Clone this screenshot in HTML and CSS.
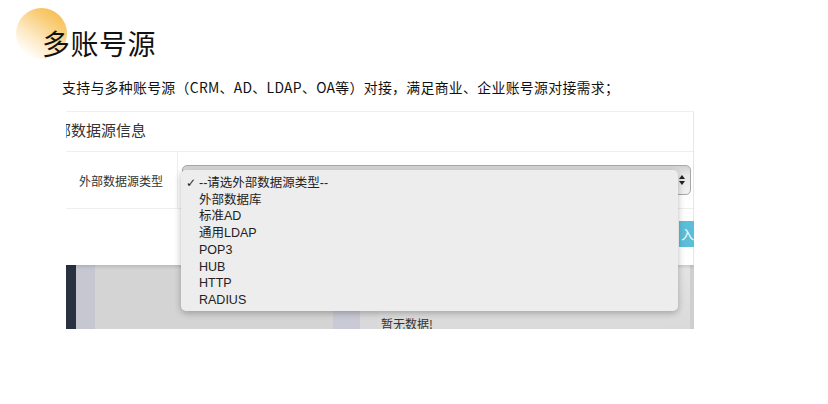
FILE: index.html
```html
<!DOCTYPE html>
<html lang="zh-CN">
<head>
<meta charset="utf-8">
<title>多账号源</title>
<link rel="stylesheet" href="styles.css">
</head>
<body>
<header class="head">
  <span class="blob"></span>
  <h1 class="title">多账号源</h1>
</header>
<p class="desc">支持与多种账号源（CRM、AD、LDAP、OA等）对接，满足商业、企业账号源对接需求；</p>
<div class="shot">
  <div class="panel">
    <div class="panel-head"><span class="panel-title">外部数据源信息</span></div>
    <div class="row">
      <div class="label">外部数据源类型</div>
      <div class="field">
        <div class="select"><span class="arrows"><i class="up"></i><i class="down"></i></span></div>
      </div>
    </div>
    <div class="panel-foot"><span class="btn">入</span></div>
  </div>
  <div class="lower">
    <div class="c-navy"></div>
    <div class="c-lav"></div>
    <div class="c-gray"></div>
    <div class="c-lav2"></div>
    <div class="c-gray2"></div>
    <div class="c-content"><span class="empty">暂无数据!</span></div>
  </div>
  <ul class="menu">
    <li><span class="check">✓</span>--请选外部数据源类型--</li>
    <li>外部数据库</li>
    <li>标准AD</li>
    <li>通用LDAP</li>
    <li>POP3</li>
    <li>HUB</li>
    <li>HTTP</li>
    <li>RADIUS</li>
  </ul>
</div>
</body>
</html>
```
FILE: styles.css
```css
html, body {
  margin: 0;
  padding: 0;
  background: #fff;
}
body {
  width: 828px;
  height: 404px;
  overflow: hidden;
  font-family: "Noto Sans CJK SC", "Noto Sans", sans-serif;
  color: #111;
}
.head {
  position: relative;
  height: 70px;
  padding: 0 0 0 42px;
}
.blob {
  position: absolute;
  left: 16px;
  top: 8px;
  width: 51px;
  height: 51px;
  border-radius: 50%;
  background: linear-gradient(215deg, #f6b63c 0%, #f9cd77 30%, #fde9c4 60%, rgba(255,255,255,0) 88%);
}
.title {
  position: relative;
  margin: 0;
  padding-top: 21px;
  font-size: 28px;
  line-height: 44px;
  font-weight: 400;
  color: #111;
  letter-spacing: 0.5px;
}
.desc {
  margin: 6px 0 0 62px;
  font-size: 13.9px;
  line-height: 22px;
  letter-spacing: 0.3px;
  color: #111;
}
.shot {
  position: relative;
  margin: 13px 0 0 66px;
  width: 628px;
  height: 218px;
  overflow: hidden;
  display: flex;
  flex-direction: column;
  font-family: "Liberation Sans", "Noto Sans CJK SC", sans-serif;
}
.panel {
  background: #fff;
  border-top: 1px solid #eef0f0;
  border-right: 1px solid #e6e8e8;
  height: 153px;
  display: flex;
  flex-direction: column;
  box-shadow: 0 2px 3px rgba(0,0,0,0.12);
  position: relative;
  z-index: 1;
}
.panel-head {
  height: 40px;
  box-sizing: border-box;
  padding-bottom: 5px;
  border-bottom: 1px solid #eeeeee;
  display: flex;
  align-items: center;
  overflow: hidden;
}
.panel-title {
  margin-left: -25px;
  font-size: 15px;
  color: #333;
  white-space: nowrap;
  font-family: "Noto Sans CJK SC", sans-serif;
}
.row {
  height: 56px;
  border-bottom: 1px solid #eeeeee;
  display: flex;
}
.label {
  width: 112px;
  border-right: 1px solid #eeeeee;
  display: flex;
  align-items: center;
  padding-left: 13px;
  box-sizing: border-box;
  font-size: 12px;
  color: #333;
  font-family: "Noto Sans CJK SC", sans-serif;
}
.field {
  flex: 1;
  padding: 13px 2px 0 4px;
}
.select {
  height: 30px;
  box-sizing: border-box;
  border: 1px solid #a8a8a8;
  border-radius: 5px;
  background: linear-gradient(#d2d2d2, #e6e6e6 30%, #f0f0f0);
  display: flex;
  justify-content: flex-end;
  align-items: center;
  padding-right: 5px;
}
.arrows {
  display: flex;
  flex-direction: column;
  gap: 2px;
}
.up, .down {
  display: block;
  width: 0;
  height: 0;
  border-left: 3px solid transparent;
  border-right: 3px solid transparent;
}
.up { border-bottom: 4px solid #222; }
.down { border-top: 4px solid #222; }
.panel-foot {
  flex: 1;
  display: flex;
  justify-content: flex-end;
  align-items: flex-start;
  padding-top: 12px;
}
.btn {
  width: 50px;
  height: 26px;
  margin-right: -36px;
  background: #5bbfd9;
  color: #fff;
  font-size: 13px;
  line-height: 26px;
  text-indent: 2px;
  font-family: "Noto Sans CJK SC", sans-serif;
}
.lower {
  flex: 1;
  display: flex;
  background: #d6d6d6;
}
.c-navy { width: 10px; background: #2a3242; }
.c-lav { width: 19px; background: #c6c7d1; }
.c-gray { flex: 1; background: #d4d4d4; }
.c-lav2 { width: 27px; background: #cacad6; }
.c-gray2 { width: 18px; background: #d9d9db; }
.c-content {
  width: 316px;
  box-sizing: border-box;
  background: linear-gradient(#e4e4e4, #dadada);
  border-right: 4px solid #cfcfcf;
  display: flex;
  align-items: flex-end;
  padding-left: 3px;
}
.empty {
  font-size: 12px;
  line-height: 14px;
  color: #333;
  margin-bottom: -2px;
  font-family: "Noto Sans CJK SC", sans-serif;
}
.menu {
  position: absolute;
  left: 115px;
  top: 59px;
  width: 497px;
  height: 141px;
  box-sizing: border-box;
  margin: 0;
  padding: 5px 0 0 18px;
  list-style: none;
  background: #ededed;
  border-radius: 5px;
  box-shadow: 0 2px 7px rgba(0,0,0,0.28);
  z-index: 2;
  font-size: 12.5px;
  line-height: 16.7px;
  color: #222;
}
.menu li {
  position: relative;
  white-space: nowrap;
}
.check {
  position: absolute;
  left: -13px;
  top: 0;
  font-family: "DejaVu Sans", sans-serif;
  font-size: 12px;
  font-weight: bold;
}
```
